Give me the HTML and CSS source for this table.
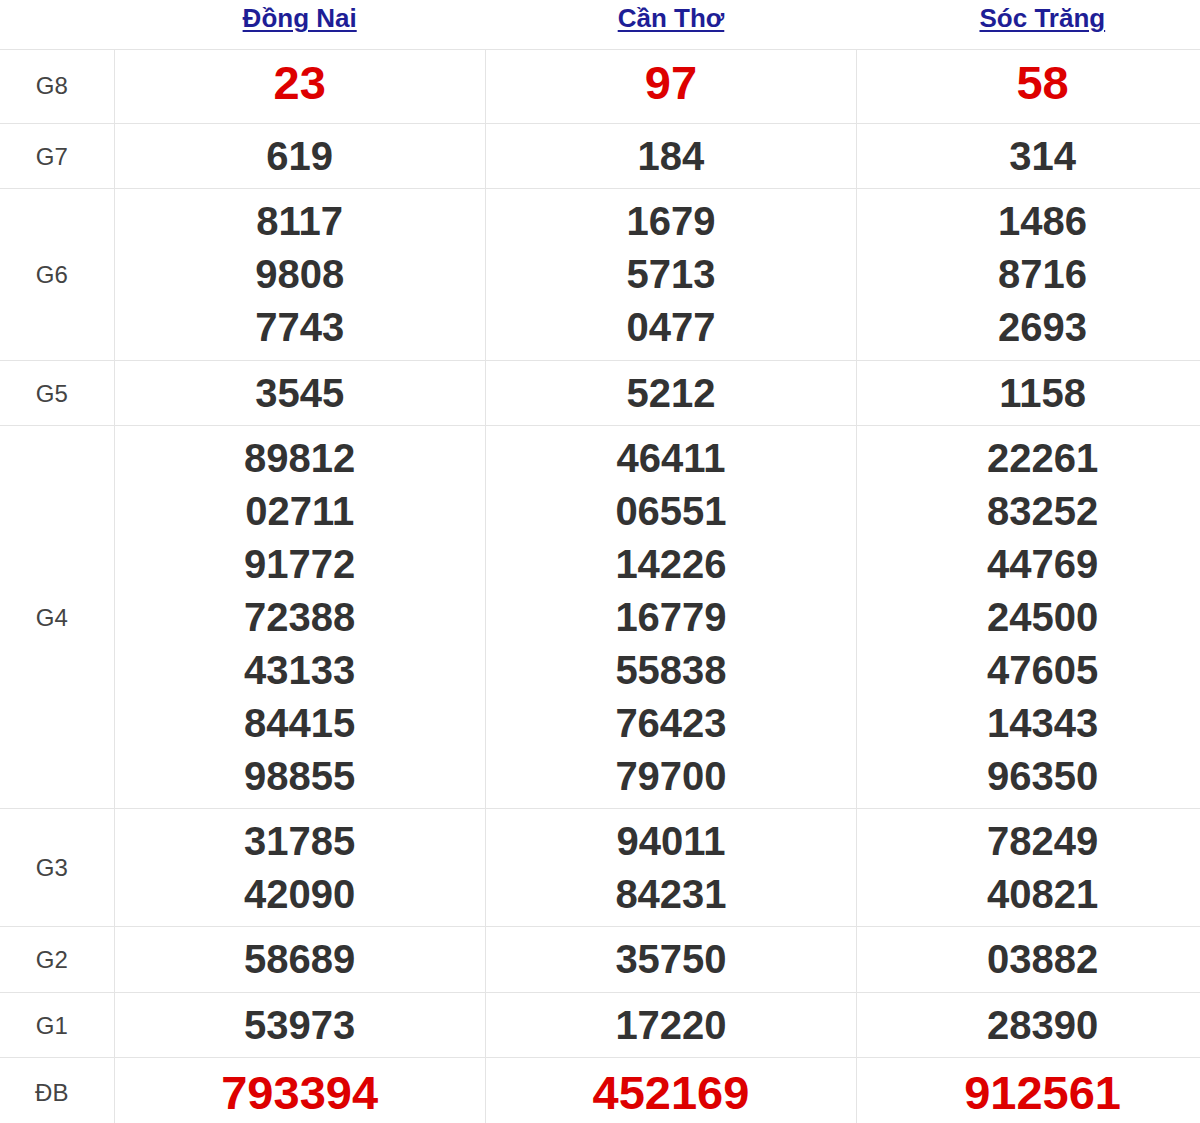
FILE: index.html
```html
<!DOCTYPE html>
<html lang="vi">
<head>
<meta charset="utf-8">
<title>KQXS</title>
<link rel="stylesheet" href="styles.css">
</head>
<body>
<table class="kq">
  <thead>
    <tr class="head">
      <th class="lbl"></th>
      <th><a href="#">Đồng Nai</a></th>
      <th><a href="#">Cần Thơ</a></th>
      <th><a href="#">Sóc Trăng</a></th>
    </tr>
  </thead>
  <tbody>
    <tr class="g8">
      <td class="lbl">G8</td>
      <td><div class="n red">23</div></td>
      <td><div class="n red">97</div></td>
      <td><div class="n red">58</div></td>
    </tr>
    <tr>
      <td class="lbl">G7</td>
      <td><div class="n">619</div></td>
      <td><div class="n">184</div></td>
      <td><div class="n">314</div></td>
    </tr>
    <tr class="tall">
      <td class="lbl">G6</td>
      <td><div class="n">8117</div><div class="n">9808</div><div class="n">7743</div></td>
      <td><div class="n">1679</div><div class="n">5713</div><div class="n">0477</div></td>
      <td><div class="n">1486</div><div class="n">8716</div><div class="n">2693</div></td>
    </tr>
    <tr>
      <td class="lbl">G5</td>
      <td><div class="n">3545</div></td>
      <td><div class="n">5212</div></td>
      <td><div class="n">1158</div></td>
    </tr>
    <tr>
      <td class="lbl">G4</td>
      <td><div class="n">89812</div><div class="n">02711</div><div class="n">91772</div><div class="n">72388</div><div class="n">43133</div><div class="n">84415</div><div class="n">98855</div></td>
      <td><div class="n">46411</div><div class="n">06551</div><div class="n">14226</div><div class="n">16779</div><div class="n">55838</div><div class="n">76423</div><div class="n">79700</div></td>
      <td><div class="n">22261</div><div class="n">83252</div><div class="n">44769</div><div class="n">24500</div><div class="n">47605</div><div class="n">14343</div><div class="n">96350</div></td>
    </tr>
    <tr>
      <td class="lbl">G3</td>
      <td><div class="n">31785</div><div class="n">42090</div></td>
      <td><div class="n">94011</div><div class="n">84231</div></td>
      <td><div class="n">78249</div><div class="n">40821</div></td>
    </tr>
    <tr class="tall">
      <td class="lbl">G2</td>
      <td><div class="n">58689</div></td>
      <td><div class="n">35750</div></td>
      <td><div class="n">03882</div></td>
    </tr>
    <tr>
      <td class="lbl">G1</td>
      <td><div class="n">53973</div></td>
      <td><div class="n">17220</div></td>
      <td><div class="n">28390</div></td>
    </tr>
    <tr class="db">
      <td class="lbl">ĐB</td>
      <td><div class="n red">793394</div></td>
      <td><div class="n red">452169</div></td>
      <td><div class="n red">912561</div></td>
    </tr>
  </tbody>
</table>
</body>
</html>
```
FILE: styles.css
```css
html, body {
  margin: 0;
  padding: 0;
  background: #ffffff;
  overflow: hidden;
}
body {
  font-family: "Liberation Sans", Arial, sans-serif;
  width: 1200px;
  height: 1123px;
}
.kq {
  border-collapse: collapse;
  table-layout: fixed;
  width: 1228px;
}
.kq th, .kq td {
  padding: 0;
  text-align: center;
  border: 1px solid #e4e4e4;
}
.kq th {
  border-top: none;
  border-left: none;
  border-right: none;
  height: 48px;
  vertical-align: top;
  padding-top: 1px;
  line-height: 34px;
}
.kq th a {
  color: #1e1e96;
  font-size: 26px;
  font-weight: bold;
  text-decoration: underline;
  text-decoration-thickness: 2px;
  text-underline-offset: 3px;
}
.kq th:first-child, .kq td.lbl {
  width: 114px;
  border-left: none;
}
.kq td:last-child, .kq th:last-child {
  border-right: none;
}
.kq td {
  padding: 6px 0 5px;
  vertical-align: middle;
}
.kq .tall td {
  padding-bottom: 6px;
}
.kq td.lbl {
  font-size: 24px;
  color: #444444;
  padding-right: 10px;
}
.n {
  font-size: 40px;
  font-weight: bold;
  color: #333333;
  line-height: 53px;
}
.n.red {
  color: #dd0000;
  font-size: 47px;
  line-height: 62px;
}
.kq .g8 td { padding: 2px 0 9px; }
.kq .g8 td.lbl { padding: 5px 10px 6px 0; }
.db td { padding-top: 4px; }
```
